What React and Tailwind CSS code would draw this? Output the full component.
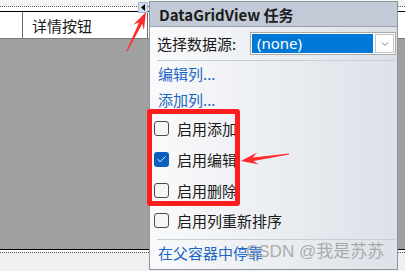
import { Check, ChevronDown } from "lucide-react";

/* tapered red annotation arrow, points computed from tail → tip */
function arrowPoints([x1, y1], [x2, y2], tail = 1, shaft = 3.5, headW = 12, headL = 17) {
  const len = Math.hypot(x2 - x1, y2 - y1);
  const dx = (x2 - x1) / len, dy = (y2 - y1) / len;
  const nx = -dy, ny = dx;
  const bx = x2 - dx * headL, by = y2 - dy * headL;
  const kx = x2 - dx * headL * 0.72, ky = y2 - dy * headL * 0.72;
  const p = [
    [x1 + (nx * tail) / 2, y1 + (ny * tail) / 2],
    [kx + (nx * shaft) / 2, ky + (ny * shaft) / 2],
    [bx + (nx * headW) / 2, by + (ny * headW) / 2],
    [x2, y2],
    [bx - (nx * headW) / 2, by - (ny * headW) / 2],
    [kx - (nx * shaft) / 2, ky - (ny * shaft) / 2],
    [x1 - (nx * tail) / 2, y1 - (ny * tail) / 2],
  ];
  return p.map(([a, b]) => `${a.toFixed(1)},${b.toFixed(1)}`).join(" ");
}

function Box({ checked }) {
  return checked ? (
    <div className="w-[15px] h-[15px] rounded-[3px] bg-[#0a5fbf] flex items-center justify-center">
      <Check size={11} strokeWidth={2} className="text-white" />
    </div>
  ) : (
    <div className="w-[15px] h-[15px] rounded-[3px] border border-[#4a4a4a] bg-[#f6f6f6]" />
  );
}

const checks = [
  ["启用添加", false, "h-[31px]"],
  ["启用编辑", true, "h-[31px]"],
  ["启用删除", false, "h-[30px]"],
  ["启用列重新排序", false, "h-[30px]"],
];

export default function App() {
  return (
    <div className="relative w-[405px] h-[271px] overflow-hidden bg-[#f0f0f0] font-['Noto_Sans_CJK_SC','Noto_Sans',sans-serif] text-[#1a1a1a]">
      {/* designer surface */}
      <div className="flex flex-col h-full">
        <div className="h-[6px] bg-[#f3f3f3]" />
        <div className="h-[5px] bg-white border-t border-dotted border-[#555]" />
        <div className="h-[28px] flex bg-white border-t border-black border-b border-b-[#7a7a7a]">
          <div className="w-[23px] border-r border-[#6a6a6a]" />
          <div className="w-[125px] border-r border-[#6a6a6a] pl-[9px] flex items-center text-[15px] leading-none">详情按钮</div>
        </div>
        <div className="h-[210px] bg-[#a0a0a0]" />
        <div className="h-[3px] bg-white border-t border-black" />
        <div className="flex-1 bg-[#f0f0f0] border-t border-dotted border-[#555]" />
      </div>

      {/* smart tag glyph */}
      <div className="absolute left-[138px] top-[2px] w-[10px] h-[11px] bg-[#cfe0f3] border border-[#9fb8d6] flex items-center justify-center">
        <svg width="5" height="7" viewBox="0 0 5 7"><path d="M4,0 L0,3.5 L4,7 Z" fill="#000" /></svg>
      </div>

      {/* tasks panel */}
      <div className="absolute left-[149px] top-[1px] w-[249px] h-[269px] border border-[#8e95a0] flex flex-col bg-gradient-to-r from-[#f9fafb] to-[#dde1e8]">
        <div className="h-[25px] bg-[#c2cad7] border-b border-[#9aa1ad] flex items-center pl-[9px] text-[15px] font-bold leading-none text-[#1c1c1c]">
          DataGridView 任务
        </div>
        <div className="mt-[5px] h-[23px] flex items-center pl-[7px] pr-[1px]">
          <span className="text-[15px] leading-none">选择数据源:</span>
          <div className="ml-auto w-[146px] h-[23px] border border-[#a9a9a9] bg-white p-[1px] flex">
            <div className="flex-1 bg-[#0078d7] text-white text-[15px] leading-none flex items-center pl-[5px] font-['Noto_Sans',sans-serif]">(none)</div>
            <div className="w-[19px] ml-[2px] border border-[#c4c4c4] bg-white flex items-center justify-center">
              <ChevronDown size={12} strokeWidth={1.5} className="text-[#555]" />
            </div>
          </div>
        </div>
        <div className="mt-[5px] mx-[7px] mr-[2px] h-px bg-[#c8ccd4]" />
        <div className="h-[25px] flex items-center pl-[8px] text-[15px] leading-none text-[#1d66c2]">编辑列...</div>
        <div className="h-[27px] flex items-center pl-[8px] text-[15px] leading-none text-[#1d66c2]">添加列...</div>
        {checks.map(([label, on, h]) => (
          <div key={label} className={`${h} flex items-center gap-[8px] pl-[4px] text-[15px] leading-none`}>
            <Box checked={on} />
            <span>{label}</span>
          </div>
        ))}
        <div className="mt-[4px] mx-[7px] mr-[2px] h-px bg-[#c8ccd4]" />
        <div className="h-[25px] flex items-center pl-[8px] text-[15px] leading-none text-[#1d66c2]">在父容器中停靠</div>
      </div>

      {/* watermark */}
      <div className="absolute left-[246px] top-[243px] text-[17px] leading-none text-[#9a9a9a]/80 font-['Liberation_Sans','Noto_Sans_CJK_SC',sans-serif]">
        CSDN @我是苏苏
      </div>

      {/* annotations */}
      <div className="absolute left-[147px] top-[109px] w-[93px] h-[97px] border-[5px] border-[#ff1e1e] rounded-[3px]" />
      <svg className="absolute inset-0 pointer-events-none" width="405" height="271">
        <polygon points={arrowPoints([127, 51], [146, 12])} fill="#ff2a2a" />
        <polygon points={arrowPoints([289, 154], [241, 161])} fill="#ff2a2a" />
      </svg>
    </div>
  );
}
